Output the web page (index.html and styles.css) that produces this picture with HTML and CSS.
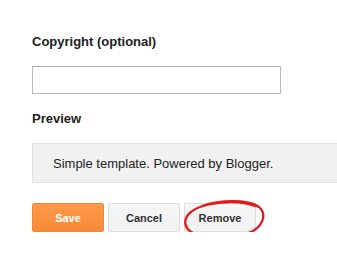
FILE: index.html
```html
<!DOCTYPE html>
<html>
<head>
  <title>Copyright</title>
  <link rel="stylesheet" href="styles.css">
</head>
<body>
  <div class="widget-form">
    <h3 class="field-label">Copyright (optional)</h3>
    <input type="text" class="text-input">
    <h3 class="field-label preview-label">Preview</h3>
    <div class="preview-box">Simple template. Powered by Blogger.</div>
    <div class="button-row">
      <button class="btn btn-save">Save</button>
      <button class="btn">Cancel</button>
      <button class="btn">Remove</button>
      <svg class="circle-mark" width="86" height="42" viewBox="0 0 86 42">
        <path d="M20 7 C37 1 66 0 77 8 C85 15 82 29 64 35 C49 40 24 40 11 34 C1 29 1 19 9 13 C16 7 32 3 49 3 C59 3 66 4 73 7"
              fill="none" stroke="#e01b1b" stroke-width="2.3" stroke-linecap="round"/>
      </svg>
    </div>
  </div>
</body>
</html>
```

FILE: styles.css
```css
html {
  overflow: hidden;
}

body {
  background-color: #fff;
  font-family: Arial, "Liberation Sans", sans-serif;
  margin: 0;
  padding: 34px 0 0 32px;
  color: #222;
}

.field-label {
  font-size: 13px;
  line-height: 16px;
  font-weight: bold;
  margin: 0 0 16px 0;
}

.preview-label {
  margin-bottom: 16px;
}

.text-input {
  display: block;
  box-sizing: border-box;
  width: 249px;
  height: 28px;
  border: 1px solid #b9b9b9;
  border-top-color: #a8a8a8;
  border-radius: 1px;
  margin: 0 0 17px 0;
  padding: 0 8px;
  font-size: 13px;
}

.preview-box {
  box-sizing: border-box;
  width: 320px;
  height: 40px;
  background-color: #f1f1f1;
  border: 1px solid #e3e3e3;
  padding: 12px 20px 10px 20px;
  font-size: 13px;
  line-height: 16px;
  color: #222;
  margin-bottom: 20px;
}

.button-row {
  position: relative;
  display: flex;
  gap: 4px;
}

.btn {
  box-sizing: border-box;
  min-width: 72px;
  height: 29px;
  padding: 0 8px;
  border: 1px solid #dcdcdc;
  border-radius: 2px;
  background: linear-gradient(#f6f6f6, #f1f1f1);
  color: #333;
  font-family: Arial, "Liberation Sans", sans-serif;
  font-size: 11px;
  font-weight: bold;
  cursor: pointer;
}

.btn-save {
  border-color: #f0883a;
  background: linear-gradient(#fe9a4c, #f98a36);
  color: #fff;
}

.circle-mark {
  position: absolute;
  left: 150px;
  top: -4px;
  pointer-events: none;
}
```
